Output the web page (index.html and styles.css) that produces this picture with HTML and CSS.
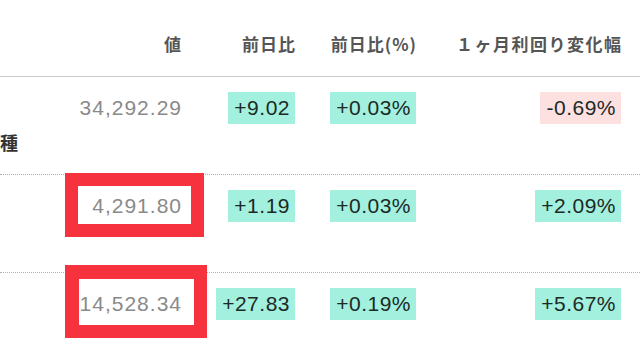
FILE: index.html
```html
<!DOCTYPE html>
<html lang="ja">
<head>
<meta charset="utf-8">
<link rel="stylesheet" href="styles.css">
</head>
<body>
<div class="page">
  <div class="table">
    <div class="row head">
      <div class="cell name"></div>
      <div class="cell"><span class="hd">値</span></div>
      <div class="cell"><span class="hd">前日比</span></div>
      <div class="cell"><span class="hd">前日比(%)</span></div>
      <div class="cell"><span class="hd wide">１ヶ月利回り変化幅</span></div>
    </div>
    <div class="row">
      <div class="cell name"><span class="label">種</span></div>
      <div class="cell"><span class="val">34,292.29</span></div>
      <div class="cell"><span class="badge up">+9.02</span></div>
      <div class="cell"><span class="badge up">+0.03%</span></div>
      <div class="cell"><span class="badge down">-0.69%</span></div>
    </div>
    <div class="row">
      <div class="cell name"></div>
      <div class="cell"><span class="val">4,291.80</span></div>
      <div class="cell"><span class="badge up">+1.19</span></div>
      <div class="cell"><span class="badge up">+0.03%</span></div>
      <div class="cell"><span class="badge up">+2.09%</span></div>
    </div>
    <div class="row last">
      <div class="cell name"></div>
      <div class="cell"><span class="val">14,528.34</span></div>
      <div class="cell"><span class="badge up">+27.83</span></div>
      <div class="cell"><span class="badge up">+0.19%</span></div>
      <div class="cell"><span class="badge up">+5.67%</span></div>
    </div>
  </div>
  <div class="mark mark-a"></div>
  <div class="mark mark-b"></div>
</div>
</body>
</html>
```
FILE: styles.css
```css
html, body {
  margin: 0;
  padding: 0;
  background: #ffffff;
}
.page {
  position: relative;
  width: 640px;
  height: 360px;
  overflow: hidden;
  font-family: "Liberation Sans", "Noto Sans CJK JP", sans-serif;
}
.table {
  display: flex;
  flex-direction: column;
}
.row {
  display: grid;
  grid-template-columns: 60px 121px 114px 121px 205px;
  padding-right: 19px;
  height: 97px;
  border-bottom: 1px dotted #b0b0b0;
  box-sizing: content-box;
}
.row.head {
  height: 76px;
  border-bottom: 1px solid #c9c9c9;
}
.row.last {
  border-bottom: none;
}
.cell {
  display: flex;
  justify-content: flex-end;
  align-items: flex-start;
  padding-top: 15px;
}
.head .cell {
  padding-top: 34px;
}
.hd {
  font-family: "Noto Sans CJK JP", sans-serif;
  font-weight: 700;
  font-size: 17px;
  letter-spacing: 1px;
  margin-right: -1px;
  line-height: 20px;
  color: #555555;
}
.hd.wide {
  letter-spacing: 1.5px;
  margin-right: -1.5px;
}
.cell.name {
  justify-content: flex-start;
}
.label {
  margin-top: 38px;
  font-family: "Noto Sans CJK JP", sans-serif;
  font-weight: 700;
  font-size: 18px;
  line-height: 24px;
  color: #333333;
}
.val {
  font-size: 21px;
  letter-spacing: 1px;
  line-height: 32px;
  color: #8a8a8a;
  margin-right: -1px;
}
.badge {
  display: inline-block;
  height: 32px;
  line-height: 32px;
  padding: 0 5px 0 6px;
  font-size: 21px;
  letter-spacing: 0.5px;
  color: #1c2a27;
}
.badge.up {
  background: #a2f0dd;
}
.badge.down {
  background: #fde0e0;
}
.mark {
  position: absolute;
  border: 13px solid #f7323f;
  box-sizing: border-box;
}
.mark-a {
  left: 65px;
  top: 173px;
  width: 139px;
  height: 64px;
}
.mark-b {
  left: 65px;
  top: 265px;
  width: 142px;
  height: 73px;
  border-width: 14px 13px 13px 14px;
}
```
